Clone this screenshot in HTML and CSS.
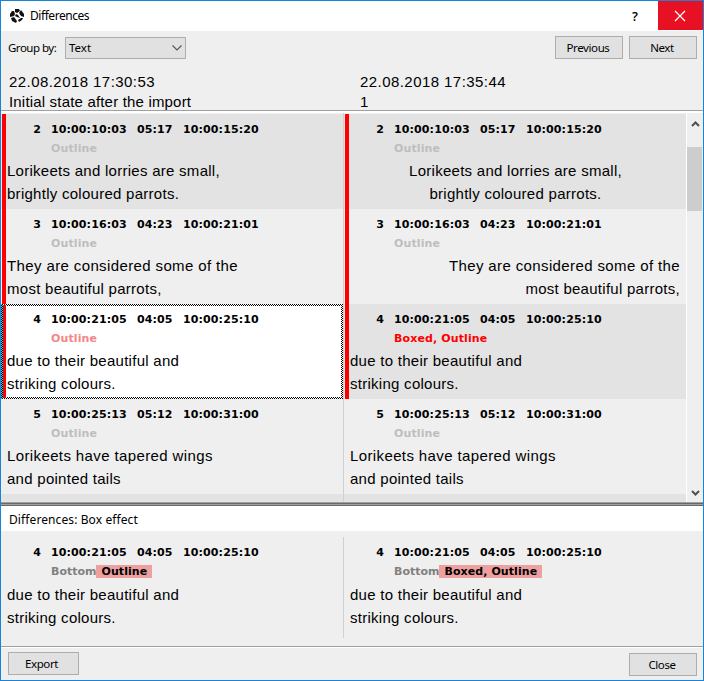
FILE: index.html
```html
<!DOCTYPE html>
<html lang="en">
<head>
<meta charset="utf-8">
<title>Differences</title>
<link rel="stylesheet" href="styles.css">
</head>
<body>
<main class="window">
  <header class="titlebar">
    <svg class="logo" width="16" height="16" viewBox="0 0 16 16"><path d="M6 1L10 1L11 3L8 5L6 4ZM12 2L15 6L15 9L12 8L10 5ZM3 3L5 3L6 6L5 8L1 9L1 6ZM7 6L9 7L11 10L8 9L6 8ZM2 10L5 9L8 13L7 15L3 13ZM12 10L14 10L13 12L10 14L9 12Z" fill="#111"/></svg>
    <h1 class="ui w-title">Differences</h1>
    <span class="help">?</span>
    <button class="x" aria-label="Close window"><svg width="12" height="12" viewBox="0 0 12 12"><path d="M1 1l10 10M11 1L1 11" stroke="#fff" stroke-width="1.2"/></svg></button>
  </header>
  <section class="toolbar">
    <span class="ui w-group">Group by:</span>
    <div class="select"><span class="ui">Text</span><svg width="10" height="6" viewBox="0 0 10 6"><path d="M.5 .5L5 5L9.500 .5" fill="none" stroke="#555" stroke-width="1.1"/></svg></div>
    <button class="btn push">Previous</button>
    <button class="btn">Next</button>
  </section>
  <section class="versions">
    <div><span class="date">22.08.2018 17:30:53</span><br>Initial state after the import</div>
    <div><span class="date">22.08.2018 17:35:44</span><br>1</div>
  </section>
  <section class="list">
    <div class="column left">
      <article class="row dark changed"><div class="times"><b>2</b><b>10:00:10:03</b><b>05:17</b><b>10:00:15:20</b></div><div class="effect">Outline</div><p>Lorikeets and lorries are small,<br>brightly coloured parrots.</p></article>
      <article class="row changed"><div class="times"><b>3</b><b>10:00:16:03</b><b>04:23</b><b>10:00:21:01</b></div><div class="effect">Outline</div><p><span class="loose">They are considered some of the</span><br>most beautiful parrots,</p></article>
      <article class="row changed selected"><div class="times"><b>4</b><b>10:00:21:05</b><b>04:05</b><b>10:00:25:10</b></div><div class="effect pink">Outline</div><p>due to their beautiful and<br>striking colours.</p></article>
      <article class="row"><div class="times"><b>5</b><b>10:00:25:13</b><b>05:12</b><b>10:00:31:00</b></div><div class="effect">Outline</div><p><span class="loose">Lorikeets have tapered wings</span><br>and pointed tails</p></article>
      <div class="row dark"></div>
    </div>
    <div class="column right">
      <article class="row dark changed"><div class="times"><b>2</b><b>10:00:10:03</b><b>05:17</b><b>10:00:15:20</b></div><div class="effect">Outline</div><p class="center">Lorikeets and lorries are small,<br>brightly coloured parrots.</p></article>
      <article class="row changed"><div class="times"><b>3</b><b>10:00:16:03</b><b>04:23</b><b>10:00:21:01</b></div><div class="effect">Outline</div><p class="end"><span class="loose">They are considered some of the</span><br>most beautiful parrots,</p></article>
      <article class="row dark changed"><div class="times"><b>4</b><b>10:00:21:05</b><b>04:05</b><b>10:00:25:10</b></div><div class="effect red">Boxed, Outline</div><p>due to their beautiful and<br>striking colours.</p></article>
      <article class="row"><div class="times"><b>5</b><b>10:00:25:13</b><b>05:12</b><b>10:00:31:00</b></div><div class="effect">Outline</div><p><span class="loose">Lorikeets have tapered wings</span><br>and pointed tails</p></article>
      <div class="row dark"></div>
    </div>
    <div class="scroll">
      <svg width="9" height="6" viewBox="0 0 9 6"><path d="M1 5L4.500 1.500L8 5" fill="none" stroke="#505050" stroke-width="2"/></svg>
      <div class="thumb"></div>
      <svg width="9" height="6" viewBox="0 0 9 6"><path d="M1 1L4.500 4.500L8 1" fill="none" stroke="#505050" stroke-width="2"/></svg>
    </div>
  </section>
  <div class="splitter"></div>
  <h2 class="caption">Differences: Box effect</h2>
  <section class="detail">
    <article class="row"><div class="times"><b>4</b><b>10:00:21:05</b><b>04:05</b><b>10:00:25:10</b></div><div class="effect gray">Bottom<mark>Outline</mark></div><p>due to their beautiful and<br>striking colours.</p></article>
    <article class="row"><div class="times"><b>4</b><b>10:00:21:05</b><b>04:05</b><b>10:00:25:10</b></div><div class="effect gray">Bottom<mark>Boxed, Outline</mark></div><p>due to their beautiful and<br>striking colours.</p></article>
  </section>
  <footer class="footer">
    <button class="btn export">Export</button>
    <button class="btn push close">Close</button>
  </footer>
</main>
</body>
</html>
```
FILE: styles.css
```css
* { box-sizing: border-box; }
body { margin: 0; }
h1, h2, p { margin: 0; font-weight: 400; }
.window {
  width: 704px; height: 681px; overflow: hidden;
  display: flex; flex-direction: column;
  border: 1px solid #1883d7; background: #efefef; color: #000;
  font: 12px/16px "Noto Sans", sans-serif;
}
.window > * { flex: none; }
.titlebar { height: 30px; background: #fff; display: flex; align-items: center; padding-left: 8px; }
.logo { margin-right: 5px; }
.w-title { font-size: 12px; letter-spacing: -0.45px; }
.ui, .btn { white-space: nowrap; }
.help { margin-left: auto; margin-right: 20px; font: 600 13px "Open Sans", sans-serif; }
.x { width: 45px; height: 29px; align-self: flex-start; padding: 0 1px 0 0; border: 0; background: #e81123; display: grid; place-items: center; }
.toolbar { height: 39px; display: flex; padding: 5px 6px 0 7px; align-items: flex-start; font-size: 11.5px; letter-spacing: -0.3px; }
.w-group { width: 57px; padding-top: 4px; letter-spacing: -0.5px; }
.select {
  width: 121px; height: 22px; margin-top: 1px; padding: 0 3px;
  display: flex; align-items: center; justify-content: space-between;
  border: 1px solid #adadad; background: #e1e1e1;
}
.select .ui { letter-spacing: 0; }
.btn { width: 68px; height: 23px; padding: 0 2px 0 0; border: 1px solid #adadad; background: #e1e1e1; color: #000; font: 11.5px "Noto Sans", sans-serif; letter-spacing: -0.4px; margin-left: 6px; }
.btn.push { margin-left: auto; }
.versions {
  height: 43px; border-bottom: 2px solid #fff; box-shadow: inset 0 -1px #a0a0a0;
  display: grid; grid-template-columns: 351px 1fr; padding: 2px 0 0 8px;
  font: 15px/20px "Liberation Sans", Arial, sans-serif; letter-spacing: 0.18px;
}
.date { letter-spacing: 0.44px; }
.list { height: 389px; display: grid; grid-template-columns: 342px 343px 17px; overflow: hidden; }
.column { padding-top: 1px; overflow: hidden; }
.row { position: relative; height: 95px; }
.right { border-left: 1px solid #d0d0d0; }
.dark { background: #e3e3e3; }
.changed::before { content: ""; position: absolute; left: 1px; top: 0; bottom: 0; width: 4px; background: #f00; }
.selected { background: #fff; }
.selected::before { left: 2px; width: 3px; }
/* Checkered focus frame; the left side is cyan over the change bar */
.selected::after {
  content: ""; position: absolute; inset: 0;
  background:
    repeating-conic-gradient(#000 0 25%, #00e5ff 0 50%) 0 0 / 2px 2px;
  border: 0; clip-path: inset(0 calc(100% - 2px) 0 0);
}
.selected {
  background:
    linear-gradient(#fff, #fff) 2px 2px / calc(100% - 4px) calc(100% - 4px) no-repeat,
    repeating-conic-gradient(#000 0 25%, #fff 0 50%) 0 0 / 2px 2px;
}
.selected::before { top: 1px; bottom: 1px; }
.times, .effect { font: bold 11px/15px "DejaVu Sans", Verdana, sans-serif; letter-spacing: 0.12px; }
.times { display: grid; grid-template-columns: 40px 76px 36px 76px; column-gap: 10px; padding-top: 8px; height: 27px; white-space: nowrap; }
.times b:first-child { text-align: right; }
.effect { height: 18px; padding-left: 50px; color: #bebebe; }
.pink { color: #f48686; }
.red { color: #f00; }
.row p { padding: 0 6px; font: 15px/23px "Liberation Sans", Arial, sans-serif; letter-spacing: 0.27px; }
.row p .loose { letter-spacing: 0.38px; }
.row .center { text-align: center; padding-right: 5px; }
.end { text-align: right; }
.gray { color: #808080; letter-spacing: 0; }
.detail .row p { padding-top: 1px; }
.scroll { border-left: 1px solid #fff; display: flex; flex-direction: column; align-items: center; padding: 8px 0 6px; }
.scroll svg:last-child { margin-top: auto; }
.thumb { width: 15px; height: 64px; margin: 20px 1px 0 0; background: #cdcdcd; }
.splitter { height: 4px; background: linear-gradient(#a0a0a0 1px, #696969 1px 2px, #a0a0a0 2px 3px, #696969 3px); }
.caption { height: 25px; font-size: 12px; line-height: 27px; letter-spacing: 0.1px; padding-left: 8px; background: #fff; }
.detail { height: 115px; display: grid; grid-template-columns: 342px 343px; padding: 6px 0 8px; }
.detail .row { height: 101px; }
.detail .row + .row { border-left: 1px solid #d0d0d0; }
.detail mark { display: inline-block; height: 13px; line-height: 13px; padding: 0 5px; background: #ee9f9f; color: #000; letter-spacing: 0.08px; }
.footer { flex: 1; display: flex; border-top: 1px solid #a0a0a0; box-shadow: inset 0 1px #fff; padding: 5px 6px 0 7px; }
.export { width: 71px; margin-left: 0; padding-right: 4px; }
.close { margin-top: 1px; }
```
